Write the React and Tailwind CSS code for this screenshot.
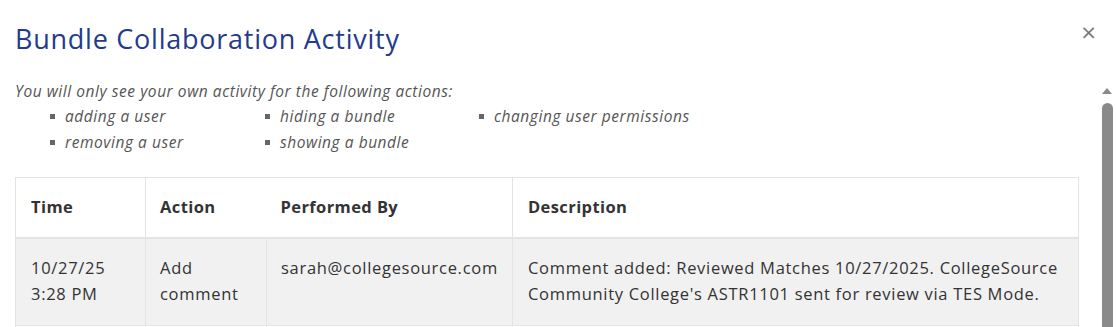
import { useState } from "react";

function App() {
  const [open] = useState(true);

  const rows = [
    {
      time: ["10/27/25", "3:28 PM"],
      action: ["Add", "comment"],
      by: "sarah@collegesource.com",
      desc: "Comment added: Reviewed Matches 10/27/2025. CollegeSource Community College's ASTR1101 sent for review via TES Mode.",
    },
  ];

  if (!open) return null;

  return (
    <div className="w-[1116px] h-[327px] overflow-hidden bg-white font-['Open_Sans',sans-serif] text-[#333]">
      <div className="flex items-start justify-between pl-[15px] pr-[19px] pt-[21px]">
        <h2 className="text-[27px] leading-[36px] text-[#243a8c] tracking-[0.75px]">
          Bundle Collaboration Activity
        </h2>
        <button className="text-[#777] text-[20px] leading-none mt-[1px] font-['DejaVu_Sans',sans-serif]">
          ×
        </button>
      </div>

      <div className="flex mt-[22px]">
        <div className="flex-1 pl-[15px] pr-[21px]">
          <p className="italic text-[15.5px] leading-[24px] text-[#555] tracking-[0.55px]">
            You will only see your own activity for the following actions:
          </p>
          <div className="flex italic text-[15.5px] leading-[26px] text-[#555] tracking-[0.55px] pl-[35px]">
            <ul className="w-[215px]">
              <li className="flex items-center gap-[10px]">
                <span className="w-[5px] h-[5px] bg-[#666]" />
                adding a user
              </li>
              <li className="flex items-center gap-[10px]">
                <span className="w-[5px] h-[5px] bg-[#666]" />
                removing a user
              </li>
            </ul>
            <ul className="w-[214px]">
              <li className="flex items-center gap-[10px]">
                <span className="w-[5px] h-[5px] bg-[#666]" />
                hiding a bundle
              </li>
              <li className="flex items-center gap-[10px]">
                <span className="w-[5px] h-[5px] bg-[#666]" />
                showing a bundle
              </li>
            </ul>
            <ul>
              <li className="flex items-center gap-[10px]">
                <span className="w-[5px] h-[5px] bg-[#666]" />
                changing user permissions
              </li>
            </ul>
          </div>

          <table className="w-[1064px] mt-[22px] border-collapse border border-[#e2e4e8] text-[16.5px] tracking-[0.7px]">
            <thead>
              <tr className="h-[60px] border-b-2 border-[#e2e4e8] text-left tracking-[0.4px]">
                <th className="w-[130px] pl-[15px] font-bold border-r border-[#e2e4e8]">Time</th>
                <th className="w-[121px] pl-[14px] font-bold">Action</th>
                <th className="w-[246px] pl-[14px] font-bold border-r border-[#e2e4e8]">Performed By</th>
                <th className="pl-[15px] font-bold">Description</th>
              </tr>
            </thead>
            <tbody>
              {rows.map((r, i) => (
                <tr key={i} className="bg-[#f1f1f1] align-top">
                  <td className="pl-[15px] pt-[16px] pb-[18px] leading-[26px] border-r border-b border-[#e2e4e8]">
                    {r.time[0]}
                    <br />
                    {r.time[1]}
                  </td>
                  <td className="pl-[14px] pt-[16px] leading-[26px] border-r border-b border-[#e2e4e8]">
                    {r.action[0]}
                    <br />
                    {r.action[1]}
                  </td>
                  <td className="pl-[14px] pt-[16px] leading-[26px] border-r border-b border-[#e2e4e8]">
                    {r.by}
                  </td>
                  <td className="pl-[15px] pr-[12px] pt-[16px] leading-[26px] border-b border-[#e2e4e8]">
                    {r.desc}
                  </td>
                </tr>
              ))}
              <tr className="h-[60px]">
                <td className="border-r border-[#e2e4e8]" />
                <td className="border-r border-[#e2e4e8]" />
                <td className="border-r border-[#e2e4e8]" />
                <td />
              </tr>
            </tbody>
          </table>
        </div>

        <div className="w-[16px] flex flex-col items-center pr-[2px]">
          <svg width="12" height="8" viewBox="0 0 12 8" className="mt-[8px]">
            <path d="M6 1 L11 7 L1 7 Z" fill="#8a8a8a" />
          </svg>
          <div className="w-[11px] h-[260px] mt-[8px] rounded-full bg-[#8a8a8a]" />
        </div>
      </div>
    </div>
  );
}

export default App;
